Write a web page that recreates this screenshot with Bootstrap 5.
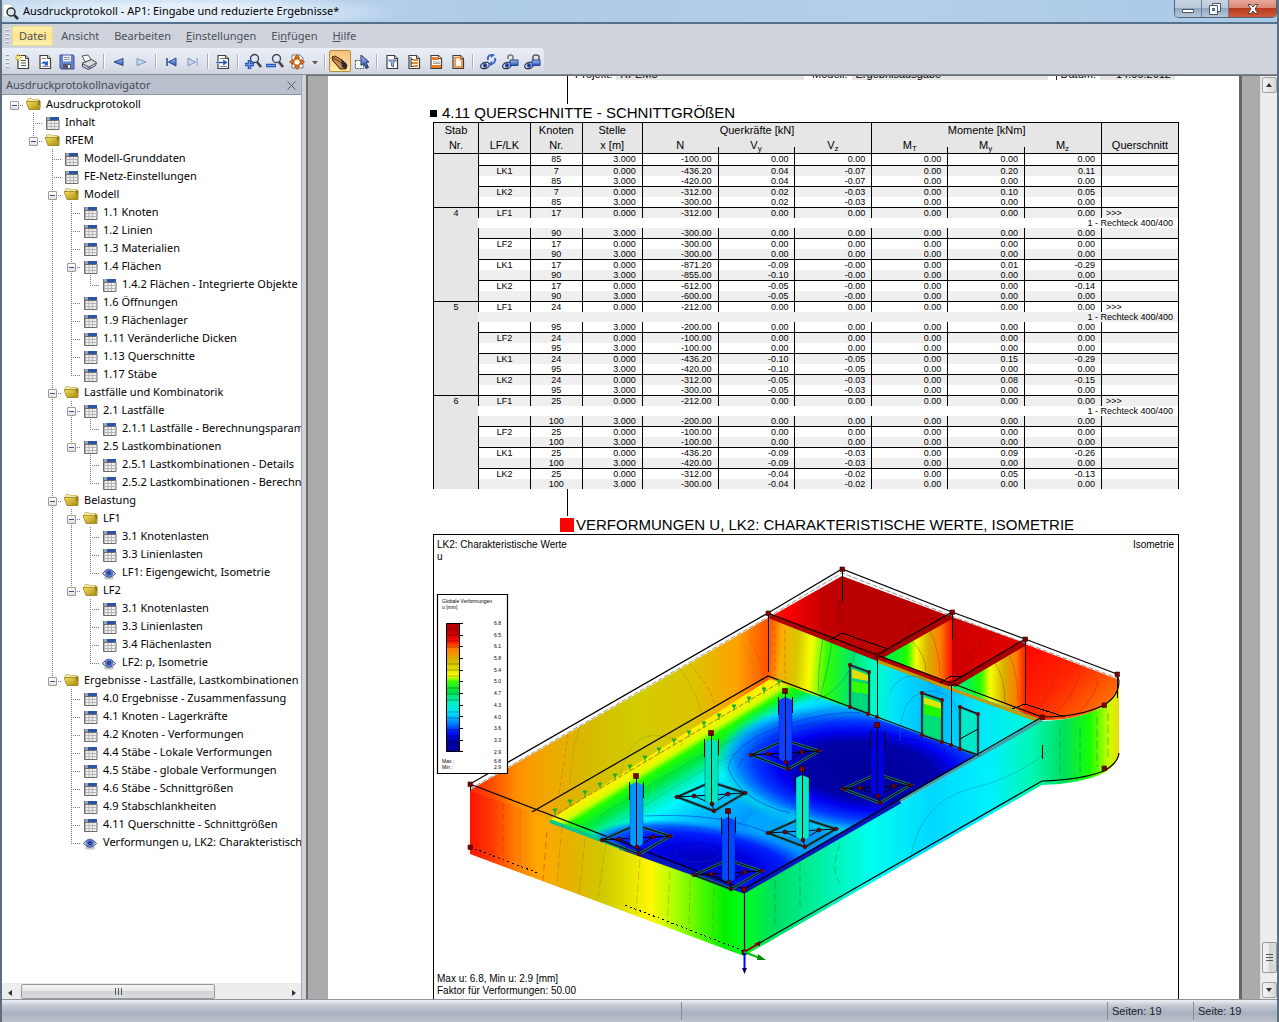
<!DOCTYPE html>
<html lang="de">
<head>
<meta charset="utf-8">
<meta name="viewport" content="width=device-width, initial-scale=1">
<title>Ausdruckprotokoll - AP1: Eingabe und reduzierte Ergebnisse*</title>
<link href="https://cdn.jsdelivr.net/npm/bootstrap@5.3.0/dist/css/bootstrap.min.css" rel="stylesheet">
<style>
:root{--ui:"Noto Sans","Open Sans",sans-serif;--doc:"Liberation Sans",Arial,sans-serif}
body{font:11px/18px var(--ui);color:#000;background:#cfd3dc}
button{font:inherit;color:inherit}
.app-window{height:100vh;border-left:2px solid #5d6e80;border-right:2px solid #5d6e80}
.title-strip{height:24px;background:radial-gradient(ellipse 220px 18px at 180px 12px,#e4effa 40%,#e4effa00),linear-gradient(90deg,#c3daf0,#aecbe8 40%,#b4cfe9 70%,#a9c9e8);border-bottom:2px solid #55708a}
.app-title{font-size:11px}
.win-buttons{height:18px;border:1px solid #4f6175;border-top:0;border-radius:0 0 5px 5px;overflow:hidden}
.win-btn{width:27px;border:0;border-right:1px solid #6b7f94;background:linear-gradient(#c8d4e2,#b9c8d9 48%,#93a8c0 50%,#b5c8dc)}
.win-btn.close-win{width:47px;border:0;background:linear-gradient(#e6a99d,#d98573 48%,#b93a1d 50%,#cf5a3a)}
.menu-strip{height:24px;color:#4b515b}
.menu-strip .nav-link{padding:0 6px;margin-right:1px;border:1px solid transparent;color:#4b515b;line-height:18px}
.menu-strip .nav-link.open-menu{background:linear-gradient(#fdf0b0,#fbe389 50%,#fdf2b4);border-color:#f0d889}
.grip{width:3px;height:14px;margin:0 3px 0 4px;background:repeating-linear-gradient(#fff 0 1px,#8d95a3 1px 2px,transparent 2px 4px)}
.tool-strip{height:26px;width:542px;border-radius:0 4px 4px 0;background:linear-gradient(#eaeef6,#dde2ec 60%,#cfd4df)}
.tool-btn{width:22px;height:22px;border:1px solid transparent;background:none;padding:0;flex:none}
.tool-btn.pressed{border-color:#b98a3c;background:linear-gradient(#f5c37f,#fbd08c 50%,#fff0a8);border-radius:2px}
.tool-btn.with-arrow{width:35px}
.tool-rule{width:2px;height:15px;margin:0 3px;border-left:1px solid #a9afbb;border-right:1px solid #fff;flex:none}
.tool-space{height:27px;border-bottom:1px solid #858b95}
.nav-pane{width:300px;background:#fff;border-right:1px solid #a3a9b4}
.pane-head{height:20px;background:#b9c0cb;border-bottom:1px solid #8f959f;color:#454b57;padding:0 5px 0 4px;flex:none}
.tree-list{padding-left:3px}
.tree-row{height:18px;white-space:nowrap}
.guide{width:19px;height:18px;flex:none;
 --dot-v:repeating-linear-gradient(#777 0 1px,transparent 1px 2px);--dot-h:repeating-linear-gradient(90deg,#777 0 1px,transparent 1px 2px);background-repeat:no-repeat}
.guide.bar{background-image:var(--dot-v);background-size:1px 18px;background-position:9px 0}
.guide.tee{background-image:var(--dot-v),var(--dot-h);background-size:1px 18px,10px 1px;background-position:9px 0,9px 10px}
.guide.elbow{background-image:var(--dot-v),var(--dot-h);background-size:1px 10px,10px 1px;background-position:9px 0,9px 10px}
.guide.rootline{background-image:var(--dot-h);background-size:10px 1px;background-position:9px 10px}
.twist{width:9px;height:9px;margin:6px 0 0 5px;padding:0;border:1px solid #9a9a9a;border-radius:1px;background:linear-gradient(#35508c,#35508c) center/5px 1px no-repeat,linear-gradient(#fff,#e2e2e2);display:block}
.tree-icon{width:16px;height:16px;margin:2px 4px 0 2px;flex:none}
.hbar{height:16px;background:#ededee;flex:none}
.vbar{width:17px;background:#ededee;border-left:1px solid #e2e2e2}
.bar-btn{width:15px;height:16px;border:0;background:none;padding:0}
.vbar .bar-btn{border:1px solid #a2a2a2;border-radius:2px;background:linear-gradient(90deg,#f5f5f5,#d5d6d8);margin:1px 0}
.hthumb{width:194px;height:15px;border:1px solid #979797;border-radius:2px;background:linear-gradient(#f4f4f4,#e8e8e9 45%,#d3d4d6 50%,#dadbdd)}
.vthumb{width:15px;height:31px;border:1px solid #979797;border-radius:2px;background:linear-gradient(90deg,#f4f4f4,#e8e8e9 45%,#d3d4d6 50%,#dadbdd);margin-bottom:8px}
.viewer{margin-left:4px;background:#ababab;border:2px solid #6b6b6b;border-width:1px 0 0 2px;min-width:0}
.sheet{margin:0 18px 0 20px;background:#fff;border-right:3px solid #666;padding:0 60px 0 105px;font-family:var(--doc)}
.sheet-head{height:28px;padding-left:134px}
.sheet-head-in{border-left:1px solid #000}
.head-line{height:4px;font-size:11px;line-height:12px;padding-left:7px;overflow:hidden}
.head-field{background:#e6e6e6;padding:0 4px;height:12px;flex:none}
.head-field.model{width:196px}
.head-field.date{width:75px;text-align:right}
.sheet h2{font-size:15px;line-height:18px;margin:0;font-weight:400;white-space:nowrap}
.square-s{width:7px;height:7px;background:#000;margin:0 5px 0 -3px}
.square-r{width:14px;height:14px;background:red;margin:0 2px 0 127px}
.drop-line{height:27px;margin-left:134px;border-left:1px solid #000}
.result-grid{width:100%;table-layout:fixed;border-collapse:separate;border-spacing:0;border-right:1px solid #000;font-size:9px;line-height:10px}
.result-grid th{font-weight:400;font-size:11px;line-height:15px;height:15px;text-align:center;padding:0;background:#e6e6e6;white-space:nowrap}
.result-grid thead tr:first-child th{border-top:1px solid #000}
.result-grid thead th{border-left:1px solid #000}
.result-grid thead th.half{border-left:0;background:linear-gradient(#000,#000) left bottom/1px 6px no-repeat #e6e6e6}
.result-grid sub{font-size:8px;line-height:0}
.result-grid td{padding:0;height:10px;border-left:1px solid #000;white-space:nowrap;overflow:hidden}
.result-grid td.num{text-align:right;padding-right:6px}
.result-grid td.stab{background:#e6e6e6}
.result-grid td.note{border-left-color:transparent;text-align:right;padding-right:5px}
.result-grid tr.shade td:not(.stab){background-color:#efefef}
.result-grid tr.ruled td:not(.stab),.result-grid tr.newbar td{border-top:1px solid #000}
.result-grid tr.first td{border-top:1px solid #000;height:11px;line-height:11px}
.figure-box{border:1px solid #000;border-bottom:0}
.figure-box svg{display:block;width:100%;height:auto}
.status-strip{height:23px;border-top:1px solid #8f959f;background:linear-gradient(#eceef2,#c4cad4 25%,#a9b1be 60%,#bdc3cd);font:11px/22px var(--doc);color:#20242b;flex:none}
.status-cell{width:86px;border-left:1px solid #858b96;padding-left:4px;height:18px;line-height:18px;flex:none}
.status-cell.wide{width:426px}
.status-cell.last{width:84px}
</style>
<script src="https://cdn.jsdelivr.net/npm/bootstrap@5.3.0/dist/js/bootstrap.bundle.min.js"></script>
</head>
<body class="overflow-hidden">
<svg width="0" height="0" class="position-absolute" aria-hidden="true">
 <defs>
  <linearGradient id="gold" x2="1" y2="1"><stop stop-color="#f6e060"/><stop offset="1" stop-color="#a88a08"/></linearGradient>
  <linearGradient id="blue" y2="1" x2="0"><stop stop-color="#a8c4f4"/><stop offset="1" stop-color="#1f4fb8"/></linearGradient>
  <symbol id="i-folder" viewBox="0 0 16 16"><path d="M1.500 2.500q0-1 1-1h3l1 1h6v5h-11z" fill="#f3e9a8" stroke="#b8a030" stroke-width=".6"/><path d="M0 4.500h11.500L14 12.500H3z" fill="url(#gold)" stroke="#8a7410" stroke-width=".7"/><path d="M12.500 2.500l2 1.500V12l-2.500-7z" fill="#8d7a14"/></symbol>
  <symbol id="i-sheet" viewBox="0 0 16 16"><path d="M1.500 2h12.500v12.500H1.500z" fill="#f0f0f0"/><path d="M2.500 5v9M6 5v9M9.500 5v9M2 8.500h11M2 11.500h11" stroke="#b4b4b4" fill="none"/><path d="M1 2h4v3H1z" fill="#9aa3b4"/><path d="M5 2h9v3H5z" fill="#2c55a8"/><path d="M1.500 2v12.500h12.500V5M1.500 5.500h12" stroke="#6d6d6d" fill="none"/></symbol>
  <symbol id="i-eye" viewBox="0 0 16 16"><ellipse cx="7" cy="13" rx="5" ry="1.500" fill="#c4c4c4"/><path d="M.5 8.500Q6.500 0 13.500 8.500Q7 16 .5 8.500z" fill="#dfe6f5" stroke="#3b4455"/><circle cx="7" cy="8" r="4.200" fill="#5577d6"/><circle cx="7" cy="8" r="1.800" fill="#0d1c50"/><circle cx="7" cy="8" r=".6" fill="#fff"/></symbol>
  <symbol id="i-page" viewBox="0 0 16 16"><path d="M3 1.500h7.500l3 3v10H3z" fill="#fff" stroke="#3c3c3c" stroke-width="1.200"/><path d="M10.500 1.500v3h3" fill="#ddd" stroke="#3c3c3c"/></symbol>
  <symbol id="i-glass" viewBox="0 0 16 16"><circle cx="8.500" cy="5.500" r="4" fill="#dfeafc" stroke="#3a3f48" stroke-width="1.300"/><path d="M11 9l4 5" stroke="#3a3f48" stroke-width="2.500"/></symbol>
  <symbol id="i-chain" viewBox="0 0 16 16"><ellipse cx="5" cy="11.500" rx="4.500" ry="3" fill="#e4e9f5" stroke="#2c3344" stroke-width="1.200" transform="rotate(-20 5 11.500)"/><circle cx="5" cy="11.500" r="2.400" fill="#4468cc"/><circle cx="5" cy="11.500" r="1" fill="#0a1640"/></symbol>
  <symbol id="i-up" viewBox="0 0 8 8"><path d="M4 2l3 4H1z" fill="#333"/></symbol>
 </defs>
</svg>

<div class="app-window d-flex flex-column">
 <header class="title-strip d-flex align-items-start justify-content-between flex-shrink-0">
  <div class="d-flex align-items-center h-100">
   <svg width="17" height="17" viewBox="0 0 17 17" class="me-1"><path d="M1 1h7l3 3v10H1z" fill="#fff" stroke="#c8c8c8"/><circle cx="9" cy="9" r="4" fill="#d8e4ee" stroke="#2d2d2d" stroke-width="1.500"/><path d="M12 12l4 4" stroke="#2d2d2d" stroke-width="2.500"/></svg>
   <h1 class="app-title m-0 fw-normal">Ausdruckprotokoll - AP1: Eingabe und reduzierte Ergebnisse*</h1>
  </div>
  <div class="win-buttons d-flex">
   <button class="win-btn p-0 d-flex align-items-center justify-content-center" aria-label="Minimieren"><svg width="12" height="12"><path d="M.5 6.500h11v3H.5z" fill="#fff" stroke="#4c5561"/></svg></button>
   <button class="win-btn p-0 d-flex align-items-center justify-content-center" aria-label="Wiederherstellen"><svg width="12" height="12"><path d="M3.500.5h8v8h-8z" fill="#fff" stroke="#4c5561"/><path d="M.5 2.500h8v9h-8z" fill="#fff" stroke="#4c5561"/><path d="M3.500 5.500h2v2h-2z" fill="#9ab" stroke="#4c5561"/></svg></button>
   <button class="win-btn close-win p-0 d-flex align-items-center justify-content-center" aria-label="Schließen"><svg width="12" height="12"><path d="M1 1.500h3l2 2.500 2-2.500h3L8 6l3 4.500H8L6 8l-2 2.500H1L4 6z" fill="#fff" stroke="#5a3b38"/></svg></button>
  </div>
 </header>

 <nav class="menu-strip d-flex align-items-center flex-shrink-0" aria-label="Menü">
  <span class="grip"></span>
  <div class="nav flex-nowrap">
   <a class="nav-link open-menu" href="#">Datei</a>
   <a class="nav-link" href="#">Ansicht</a>
   <a class="nav-link" href="#">Bearbeiten</a>
   <a class="nav-link" href="#"><u>E</u>instellungen</a>
   <a class="nav-link" href="#">Ei<u>n</u>fügen</a>
   <a class="nav-link" href="#"><u>H</u>ilfe</a>
  </div>
 </nav>

 <div class="tool-space flex-shrink-0">
 <div class="tool-strip d-flex align-items-center" role="toolbar" aria-label="Werkzeuge">
  <span class="grip"></span>
  <button class="tool-btn" aria-label="Neu"><svg width="16" height="16"><use href="#i-page"/><path d="M6 6.500h5M6 9h5M6 11.500h5" stroke="#555"/><path d="M3.500 0v7M0 3.500h7M1 1l5 5M6 1L1 6" stroke="#e8b400"/><circle cx="3.500" cy="3.500" r="1.500" fill="#fff3a0"/></svg></button>
  <button class="tool-btn" aria-label="Öffnen"><svg width="16" height="16"><use href="#i-page"/><path d="M5 4.500h4M5 12.500h7" stroke="#888"/><path d="M4 10q2-4 5-2l2-1v4.500H7l1-1.500q-2-1-4 0z" fill="#2f5fc4"/></svg></button>
  <button class="tool-btn" aria-label="Speichern"><svg width="16" height="16"><path d="M1 1h13l1 1v13H2l-1-1z" fill="#6484cc" stroke="#3a5596"/><path d="M4 1.500h8v6H4z" fill="#eef"/><path d="M4 10h8v5H4z" fill="#556"/><path d="M9 11h2v3H9z" fill="#eef"/><path d="M5 3.500h6M5 5.500h6" stroke="#99a"/></svg></button>
  <button class="tool-btn" aria-label="Drucken"><svg width="16" height="16"><path d="M1 2l6-1 4 6-6 2z" fill="#fff" stroke="#555"/><path d="M1.500 9l9-3.500 5 3-1 3-7 4-6-3z" fill="#d8dade" stroke="#3e3e3e"/><path d="M2 10l6 3 7-4" fill="none" stroke="#555"/><path d="M5 12l3 1.500 3-1.500-3 3z" fill="#4468c4"/></svg></button>
  <span class="tool-rule"></span>
  <button class="tool-btn" aria-label="Vorherige Seite"><svg width="12" height="10"><path d="M1 5l9-3.500v7z" fill="url(#blue)" stroke="#2a4688"/></svg></button>
  <button class="tool-btn" aria-label="Nächste Seite"><svg width="12" height="10"><path d="M11 5L2 1.500v7z" fill="#c5d6f0" stroke="#7f97c0"/></svg></button>
  <span class="tool-rule"></span>
  <button class="tool-btn" aria-label="Erste Seite"><svg width="12" height="10"><path d="M1 1h2v8H1z" fill="#4a6fc0"/><path d="M3.500 5L11 1v8z" fill="url(#blue)" stroke="#2a4688"/></svg></button>
  <button class="tool-btn" aria-label="Letzte Seite"><svg width="12" height="10"><path d="M9.500 1h1.500v8H9.500z" fill="#9db2d8"/><path d="M8.500 5L1 1v8z" fill="#c5d6f0" stroke="#7f97c0"/></svg></button>
  <span class="tool-rule"></span>
  <button class="tool-btn" aria-label="Gehe zu"><svg width="16" height="16"><use href="#i-page"/><path d="M5 4.500h5M5 12.500h7" stroke="#777"/><path d="M1 7.500h7V5l5 3.500L8 12V9.500H1z" fill="#2f55b0" stroke="#fff" stroke-width=".5"/></svg></button>
  <span class="tool-rule"></span>
  <button class="tool-btn" aria-label="Vergrößern"><svg width="18" height="17"><g transform="translate(2 0)"><use href="#i-glass" width="16" height="16"/></g><path d="M1 11.500h9M5.500 7v9" stroke="#1d43a8" stroke-width="3.500"/><path d="M1.500 11.500h8M5.500 7.500v8" stroke="#6c98f0" stroke-width="1.500"/></svg></button>
  <button class="tool-btn" aria-label="Verkleinern"><svg width="18" height="16"><g transform="translate(2 -1)"><use href="#i-glass" width="16" height="16"/></g><path d="M0 11.500h10" stroke="#1d43a8" stroke-width="3.500"/><path d="M.5 11.500h9" stroke="#6c98f0" stroke-width="1.500"/></svg></button>
  <button class="tool-btn with-arrow" aria-label="Ansicht anpassen"><svg width="30" height="16"><path d="M3 1h8l3 3v10H3z" fill="#fff" stroke="#777"/><g fill="#ee7a1c" stroke="#8f3d05" stroke-width=".7"><path d="M8 .5L10.500 4h-5z"/><path d="M8 15.500L10.500 12h-5z"/><path d="M.5 8L4 5.500v5z"/><path d="M15.500 8L12 5.500v5z"/></g><circle cx="8" cy="8" r="3.500" fill="#fff" stroke="#d8610c" stroke-width="1.800"/><path d="M23 7h6l-3 3.500z" fill="#555"/></svg></button>
  <span class="tool-rule"></span>
  <button class="tool-btn pressed" aria-label="Hand" aria-pressed="true"><svg width="18" height="18"><path d="M1 4l3-1 7 4 5 5-1 4H9L5 11 2 8z" fill="#c98a4a" stroke="#3a2410"/><path d="M2 5l6 3 5 5" stroke="#5a3818" fill="none"/><path d="M10 6l6 5-1 5-4-2z" fill="#2c2c34"/></svg></button>
  <button class="tool-btn" aria-label="Auswahl"><svg width="17" height="16"><path d="M1.500 6.500h8v8h-8z" fill="#fff" stroke="#555" stroke-dasharray="2 1"/><path d="M7 1l8 7-3 .5 2.500 5-2.500 1-2-5-3 2z" fill="url(#blue)" stroke="#26365e"/></svg></button>
  <span class="tool-rule"></span>
  <button class="tool-btn" aria-label="Filter"><svg width="16" height="16"><use href="#i-page"/><path d="M4.500 6h8l-3 3v4l-2-1V9z" fill="#9db6e6" stroke="#34466f" stroke-width=".7"/></svg></button>
  <button class="tool-btn" aria-label="Gliederung"><svg width="16" height="16"><use href="#i-page"/><path d="M5 3v10M5 5.500h2M5 9h2M5 12.500h2" stroke="#333"/><path d="M7 5h5v2H7zM7 8h5v2H7zM7 11h5v2H7z" fill="#ef8a20"/></svg></button>
  <button class="tool-btn" aria-label="Kopfzeile"><svg width="16" height="16"><use href="#i-page"/><path d="M4 3h7v3H4zM4 11h9v3H4z" fill="#ee7a1c"/><path d="M5 8h7M5 9.500h7" stroke="#888" stroke-width=".8"/></svg></button>
  <button class="tool-btn" aria-label="Rand"><svg width="16" height="16"><use href="#i-page"/><path d="M5 3.500h5.500v2H12v7.500H5z" fill="#fff" stroke="#ee7a1c" stroke-width="1.500"/></svg></button>
  <span class="tool-rule"></span>
  <button class="tool-btn" aria-label="Aktualisieren"><svg width="17" height="16"><use href="#i-chain" width="16" height="16"/><path d="M8 6q-1-4 3-5M15 4q1 4-3 6" fill="none" stroke="#3d66cc" stroke-width="2"/><path d="M11-1l4 2-4 3zM12 7l-4 3 4 2z" fill="#3d66cc"/></svg></button>
  <button class="tool-btn" aria-label="Entsperren"><svg width="17" height="16"><use href="#i-chain" width="16" height="16"/><path d="M6 5V3q0-2 2.500-2T11 3v3" fill="none" stroke="#777" stroke-width="1.500"/><path d="M8 6h8v5.500H8z" fill="url(#blue)" stroke="#26428c"/></svg></button>
  <button class="tool-btn" aria-label="Sperren"><svg width="17" height="16"><use href="#i-chain" width="16" height="16"/><path d="M9 6V3q0-2 3-2t3 2v3" fill="none" stroke="#555" stroke-width="1.500"/><path d="M8 6h8v5.500H8z" fill="url(#blue)" stroke="#26428c"/></svg></button>
 </div>
 </div>

 <main class="d-flex flex-grow-1 overflow-hidden">
  <aside class="nav-pane d-flex flex-column flex-shrink-0">
   <div class="pane-head d-flex justify-content-between align-items-center"><span>Ausdruckprotokollnavigator</span><button class="border-0 bg-transparent p-0 lh-1" aria-label="Navigator schließen"><svg width="9" height="9"><path d="M.5.5l8 8M8.500.5l-8 8" stroke="#555b66"/></svg></button></div>
   <div class="tree-list flex-grow-1 overflow-hidden" id="tree" role="tree" aria-label="Ausdruckprotokoll"></div>
   <div class="hbar d-flex align-items-center">
    <button class="bar-btn me-1" aria-label="Nach links"><svg width="8" height="8"><path d="M6 1v6L2 4z" fill="#333"/></svg></button>
    <div class="hthumb d-flex align-items-center justify-content-center"><svg width="9" height="7"><path d="M1.500 0v7M4.500 0v7M7.500 0v7" stroke="#555"/></svg></div>
    <button class="bar-btn ms-auto" aria-label="Nach rechts"><svg width="8" height="8"><path d="M2 1v6l4-3z" fill="#333"/></svg></button>
   </div>
  </aside>

  <section class="viewer d-flex flex-grow-1">
   <article class="sheet flex-grow-1 overflow-hidden">
    <div class="sheet-head"><div class="sheet-head-in h-100">
      <div class="head-line d-flex align-items-end">
       <span class="me-1">Projekt:</span><span class="head-field flex-grow-1">RFEM5</span>
       <span class="ms-2 me-1">Modell:</span><span class="head-field model">Ergebnisausgabe</span>
       <span class="ms-2 ps-1 me-1 border-start border-dark">Datum:</span><span class="head-field date me-1">14.06.2012</span>
      </div></div></div>
    <h2 class="d-flex align-items-center"><span class="square-s"></span>4.11 QUERSCHNITTE - SCHNITTGRÖßEN</h2>
    <table class="result-grid">
     <colgroup><col style="width:6.030%"><col style="width:6.970%"><col style="width:6.970%"><col style="width:8.040%"><col style="width:10.190%"><col style="width:10.320%"><col style="width:10.320%"><col style="width:10.190%"><col style="width:10.320%"><col style="width:10.320%"><col></colgroup>
     <thead>
      <tr><th>Stab</th><th></th><th>Knoten</th><th>Stelle</th><th colspan="3">Querkräfte [kN]</th><th colspan="3">Momente [kNm]</th><th></th></tr>
      <tr><th>Nr.</th><th>LF/LK</th><th>Nr.</th><th>x [m]</th><th>N</th><th class="half">V<sub>y</sub></th><th class="half">V<sub>z</sub></th><th>M<sub>T</sub></th><th class="half">M<sub>y</sub></th><th class="half">M<sub>z</sub></th><th>Querschnitt</th></tr>
     </thead>
     <tbody id="rows"></tbody>
    </table>
    <div class="drop-line"></div>
    <h2 class="d-flex align-items-center"><span class="square-r"></span>VERFORMUNGEN U, LK2: CHARAKTERISTISCHE WERTE, ISOMETRIE</h2>
    <div class="figure-box">
    <svg viewBox="434 534 744 466" font-family="Liberation Sans, Arial, sans-serif" font-size="10" role="img" aria-label="Verformungen u, Isometrie">
     <defs>
      <linearGradient id="wLeft" gradientUnits="userSpaceOnUse" x1="470" y1="0" x2="768" y2="0"><stop stop-color="#ff2000"/><stop offset=".09" stop-color="#ff5a00"/><stop offset=".16" stop-color="#ff9000"/><stop offset=".26" stop-color="#f0a800"/><stop offset=".38" stop-color="#d8b800"/><stop offset=".55" stop-color="#d2cc00"/><stop offset=".75" stop-color="#dcc400"/><stop offset=".9" stop-color="#ffa000"/><stop offset="1" stop-color="#ff5000"/></linearGradient>
      <linearGradient id="wFront" gradientUnits="userSpaceOnUse" x1="470" y1="0" x2="744" y2="0"><stop stop-color="#ff1400"/><stop offset=".08" stop-color="#ff3800"/><stop offset=".16" stop-color="#ff7800"/><stop offset=".25" stop-color="#ffa800"/><stop offset=".36" stop-color="#e8b000"/><stop offset=".48" stop-color="#d0c800"/><stop offset=".58" stop-color="#e4e400"/><stop offset=".66" stop-color="#fff800"/><stop offset=".75" stop-color="#a8ff00"/><stop offset=".86" stop-color="#40f800"/><stop offset=".93" stop-color="#00f000"/><stop offset="1" stop-color="#00ff20"/></linearGradient>
      <linearGradient id="wRight" gradientUnits="userSpaceOnUse" x1="744" y1="0" x2="1120" y2="0"><stop stop-color="#00ff20"/><stop offset=".08" stop-color="#00e060"/><stop offset=".2" stop-color="#00f0a0"/><stop offset=".34" stop-color="#00fff0"/><stop offset=".5" stop-color="#00d8ff"/><stop offset=".65" stop-color="#00f0ff"/><stop offset=".76" stop-color="#00f8b8"/><stop offset=".85" stop-color="#00e060"/><stop offset=".92" stop-color="#18ff00"/><stop offset=".97" stop-color="#c8ff00"/><stop offset="1" stop-color="#f0d800"/></linearGradient>
      <linearGradient id="wBack" gradientUnits="userSpaceOnUse" x1="768" y1="680" x2="1040" y2="700"><stop stop-color="#ff6000"/><stop offset=".04" stop-color="#f8b000"/><stop offset=".1" stop-color="#d8c800"/><stop offset=".15" stop-color="#f8ff00"/><stop offset=".21" stop-color="#30ff00"/><stop offset=".3" stop-color="#00e868"/><stop offset=".39" stop-color="#00ffc8"/><stop offset=".48" stop-color="#00e0ff"/><stop offset=".62" stop-color="#00b4ff"/><stop offset=".76" stop-color="#00e4ff"/><stop offset="1" stop-color="#00fcd8"/></linearGradient>
      <linearGradient id="wRoomA" gradientUnits="userSpaceOnUse" x1="892" y1="0" x2="952" y2="0"><stop stop-color="#00f040"/><stop offset=".25" stop-color="#20ff00"/><stop offset=".4" stop-color="#f8ff00"/><stop offset=".6" stop-color="#d8b000"/><stop offset=".8" stop-color="#ff8000"/><stop offset="1" stop-color="#ff1000"/></linearGradient>
      <linearGradient id="wRoomB" gradientUnits="userSpaceOnUse" x1="965" y1="0" x2="1025" y2="0"><stop stop-color="#00f060"/><stop offset=".25" stop-color="#20ff00"/><stop offset=".42" stop-color="#f8ff00"/><stop offset=".65" stop-color="#d8b000"/><stop offset=".85" stop-color="#ff8000"/><stop offset="1" stop-color="#ff2000"/></linearGradient>
      <linearGradient id="rRoom1" gradientUnits="userSpaceOnUse" x1="768" y1="0" x2="840" y2="0"><stop stop-color="#ff2000"/><stop offset=".3" stop-color="#f80000"/><stop offset=".75" stop-color="#c80000"/><stop offset="1" stop-color="#ba0000"/></linearGradient>
      <linearGradient id="rRoom2" gradientUnits="userSpaceOnUse" x1="952" y1="0" x2="1025" y2="0"><stop stop-color="#cc0000"/><stop offset="1" stop-color="#e80000"/></linearGradient>
      <linearGradient id="rRoom3" gradientUnits="userSpaceOnUse" x1="1030" y1="650" x2="1095" y2="715"><stop stop-color="#ff0800"/><stop offset=".5" stop-color="#ff2800"/><stop offset="1" stop-color="#ff7000"/></linearGradient>
      <linearGradient id="floorBase" gradientUnits="userSpaceOnUse" x1="640" y1="765" x2="692" y2="850"><stop stop-color="#fff000"/><stop offset=".07" stop-color="#d0ff00"/><stop offset=".13" stop-color="#20ff00"/><stop offset=".25" stop-color="#00e840"/><stop offset=".36" stop-color="#00f0a8"/><stop offset=".5" stop-color="#00f8ff"/><stop offset=".72" stop-color="#00c0ff"/><stop offset="1" stop-color="#0098ff"/></linearGradient>
      <radialGradient id="pool"><stop stop-color="#000098"/><stop offset=".45" stop-color="#0000a8"/><stop offset=".6" stop-color="#0000f0"/><stop offset=".76" stop-color="#0038ff"/><stop offset=".88" stop-color="#0088ff"/><stop offset="1" stop-color="#00a8ff" stop-opacity="0"/></radialGradient>
      <radialGradient id="pool2"><stop stop-color="#0000b8"/><stop offset=".4" stop-color="#0000e0"/><stop offset=".7" stop-color="#0020ff"/><stop offset=".87" stop-color="#0070ff"/><stop offset="1" stop-color="#0090ff" stop-opacity="0"/></radialGradient>
      <radialGradient id="halo"><stop offset=".7" stop-color="#00b0ff"/><stop offset=".86" stop-color="#00e8ff"/><stop offset="1" stop-color="#00f0b0" stop-opacity="0"/></radialGradient>
      <linearGradient id="scale" x2="0" y2="1"><stop stop-color="#b80000"/><stop offset=".09" stop-color="#d00000"/><stop offset=".14" stop-color="#ff1000"/><stop offset=".2" stop-color="#ff8000"/><stop offset=".28" stop-color="#d8b000"/><stop offset=".36" stop-color="#e0e000"/><stop offset=".41" stop-color="#ffff00"/><stop offset=".45" stop-color="#40ff00"/><stop offset=".53" stop-color="#00e040"/><stop offset=".62" stop-color="#00f0c0"/><stop offset=".7" stop-color="#00e0ff"/><stop offset=".78" stop-color="#0080ff"/><stop offset=".85" stop-color="#0010ff"/><stop offset=".93" stop-color="#0000a0"/></linearGradient>
      <clipPath id="floorClip"><path d="M548 820L770 678L978 755L744 892z"/></clipPath>
      <g id="footing"><path d="M-34 64L0 49L34 60L3 78z" fill="none" stroke="#1c6c74" stroke-width="3"/><path d="M-34 64L0 49L34 60L3 78zM-34 64L34 60M1 49V71L3 78M-17 63L1 71L17 61" fill="none" stroke="#000"/></g>
      <g id="pillar"><path d="M-6 9L0 6L7 9V68L1 72L-6 68z" fill="currentColor"/><path d="M.5 0V71M-6.500 6V24M7.500 6V22" stroke="#000" fill="none"/><path d="M-6 9V68M7 9V68" stroke="#002060" stroke-opacity=".35"/><g fill="#800000" stroke="#200000" stroke-width=".6"><path d="M-2.500-2.500h5v5h-5z"/><circle cx="-34" cy="64" r="1.800"/><circle cx="34" cy="60" r="1.800"/><circle cx="-17" cy="63" r="2"/><circle cx="17" cy="61" r="2"/><circle cx="1" cy="71" r="2"/><circle cx="3" cy="78" r="1.800"/></g></g>
      <path id="support" d="M0 0l-2-3h4zM0-3v6" stroke="#18b030" fill="#18b030"/>
      <g id="nd"><path d="M-2-2h4.500v4.500h-4.500z" fill="#800000" stroke="#300000" stroke-width=".6"/></g>
     </defs>
     <rect x="434" y="534" width="744" height="466" fill="#fff"/>
     <path d="M470 789L508 767L730 639L768 617V680L548 822z" fill="url(#wLeft)"/>
     <path d="M768 617L842 575L952 616L877 656z" fill="url(#rRoom1)"/>
     <path d="M952 616L1025 642L951 686L940 640z" fill="url(#rRoom2)"/>
     <path d="M1025 643L1117 678Q1123 692 1104 705Q1078 720 1042 719L1020 712z" fill="url(#rRoom3)"/>
     <path d="M877 656L952 617V686z" fill="url(#wRoomA)"/>
     <path d="M951 686L1025 644V714z" fill="url(#wRoomB)"/>
     <path d="M768 616L877 657L951 686L1042 719L978 757L768 680z" fill="url(#wBack)"/>
     <path d="M768 612L877 654L951 682L948 686L877 660L768 617z" fill="#b00000"/>
     <path d="M877 660L951 688L1042 721" fill="none" stroke="#c89800" stroke-width="3"/>
     <path d="M877 655L952 612L952 618L881 658zM951 682L1025 639L1025 645L955 686z" fill="#a80000"/>
     <g clip-path="url(#floorClip)">
      <path d="M540 820L770 670L990 755L744 900z" fill="url(#floorBase)"/>
      <ellipse cx="880" cy="760" rx="165" ry="78" fill="url(#halo)"/>
      <ellipse cx="868" cy="770" rx="150" ry="64" fill="url(#pool)" transform="rotate(6 868 770)"/>
      <ellipse cx="705" cy="860" rx="122" ry="38" fill="url(#pool2)" transform="rotate(8 705 860)"/>
      <ellipse cx="780" cy="822" rx="34" ry="14" fill="#00b0ff" opacity=".55"/>
      <g fill="none" stroke="#0028d0" stroke-opacity=".65" stroke-width=".8">
       <path d="M728 767Q735 735 810 717T940 740M728 767Q740 800 790 812M738 767Q748 740 815 722M645 815Q710 812 752 826T800 846" />
       <path d="M750 765Q770 740 820 730Q900 725 940 770" stroke-dasharray="4 2"/>
       <path d="M655 830Q700 820 745 840T760 875" stroke-dasharray="5 3"/><ellipse cx="697" cy="853" rx="22" ry="8"/><ellipse cx="895" cy="765" rx="60" ry="28" stroke-dasharray="2 2" stroke="#000060"/>
      </g>
      <path d="M600 815Q680 765 720 745T840 705M620 820Q690 775 730 755T860 710" fill="none" stroke="#008888" stroke-opacity=".5" stroke-width=".6"/>
     </g>
     <path d="M470 789L744 892V955L470 853z" fill="url(#wFront)"/>
     <path d="M744 892L1042 720Q1080 719 1104 705Q1120 695 1119 680V753Q1117 765 1104 772Q1080 783 1042 784L744 955z" fill="url(#wRight)"/>
     <path d="M620 846L744 890L900 800" stroke="#0818b8" stroke-width="5" fill="none"/>
     <path d="M550 820L625 848" stroke="#00c890" stroke-width="4" fill="none"/>
     <path d="M900 800L1042 719" stroke="#40a0a8" stroke-width="3" fill="none"/>
     <g fill="none" stroke-width=".8" stroke-opacity=".6">
      <path d="M503 802V862M547 830l-4 50" stroke="#e02000" stroke-dasharray="7 4"/>
      <path d="M485 796v60M520 808v60M562 824l-5 60M585 838l-6 54M606 842l-8 54M640 858l-4 54M670 870l-3 54M690 878l-1 54M714 886l-2 54" stroke="#a06000" stroke-opacity=".4" stroke-dasharray="9 3"/>
      <path d="M775 880v46M800 862v44M840 842q-10 30 0 40M1060 728v50M1080 728v48M1097 716v50M1108 712v45" stroke="#008040" stroke-dasharray="8 4"/>
      <path d="M910 860q10-60 60-72t80-40" stroke="#0090c0"/>
      <path d="M568 733l-9 60M690 663q28 32 24 48" stroke="#e05000" stroke-dasharray="4 3"/>
      <path d="M580 725q-10 30-10 60M680 668q15 20 22 45M620 775q10-45 40-40t20 10M740 640q20 30 24 50" stroke="#a0a000"/>
      <path d="M750 640q15 22 14 50M775 625v50M785 628v50" stroke="#e04000" stroke-dasharray="5 3"/>
      <path d="M823 636q-6 40-4 55M832 642q-4 28-12 54M855 650q-5 35-40 50M890 690q20-30 50 0M900 740q0-50 30-50t30 40" stroke="#0080a0"/>
      <path d="M912 640q14 15 14 30M930 630q10 20 10 45M995 662q10 15 10 40M1010 655q8 20 8 45" stroke="#a05000"/>
      <path d="M824 588v50M840 600v25M905 640q5-20 25-22t32 3M970 660q5-20 30-28" stroke="#500000" stroke-dasharray="6 3"/>
      <path d="M1060 665q-10 30-22 42M1080 672q-8 30-30 42M1098 680q-5 20-22 34" stroke="#c02000"/>
     </g>
     <g fill="none" stroke="#999" stroke-dasharray="5 2">
      <path d="M470 788L768 616M768 616L842 572L952 615L1025 642L1117 677"/>
     </g>
     <g fill="none" stroke="#000" stroke-width="1.200">
      <path d="M470 783L768 612L842 568L952 611L1025 638L1117 673M470 783L744 888L1042 716M768 612L877 654L951 682L1042 716M877 654L952 611M951 682L1025 638"/>
      <path d="M532 811L768 675L978 754"/>
      <path d="M744.500 888V951M744 951L1042 780M1042 716Q1080 716 1104 704Q1119 695 1119 680L1117 673M1042 780Q1080 779 1104 770Q1118 762 1119 752"/>
     </g>
     <g fill="none" stroke="#000" shape-rendering="crispEdges">
      <path d="M842 568V601M768 612V671M877 654V716M951 682V744M952 611V638M1025 638V703M1117 673V697M1042 744V758M470 783V790"/>
      <path d="M830 639L842 632L888 648M940 682L951 675L962 676M1012 708L1025 703L1065 716M960 737L978 728"/>
      <path d="M470 846L538 872M625 904L744 950" stroke-dasharray="2 3"/>
     </g>
     <g stroke="#24737c" stroke-width="2.500">
      <path d="M850 664L869 671V713L850 706z" fill="#00d878"/><path d="M922 692L942 699V741L922 734z" fill="#00e078"/><path d="M960 706L978 713V754L960 748z" fill="#00e8c8"/>
     </g>
     <path d="M852 668l16 6v6l-16-3z" fill="#e0e000"/><path d="M852 680l16 3v10l-16-2z" fill="#30ff00"/><path d="M924 696l17 6v6l-17-5z" fill="#d8e800"/><path d="M924 703l17 5v9l-17-4z" fill="#20f800"/>
     <path d="M850 664L869 671V713L850 706zM922 692L942 699V741L922 734zM960 706L978 713V754L960 748zM960 738l18-10" fill="none" stroke="#000"/>
     <g fill="#700000"><circle cx="850" cy="664" r="2"/><circle cx="869" cy="671" r="2"/><circle cx="868" cy="713" r="2"/><circle cx="850" cy="706" r="2"/><circle cx="922" cy="692" r="2"/><circle cx="942" cy="699" r="2"/><circle cx="942" cy="741" r="2"/><circle cx="922" cy="734" r="2"/><circle cx="960" cy="706" r="2"/><circle cx="978" cy="713" r="2"/><circle cx="960" cy="748" r="2"/><circle cx="877" cy="716" r="2"/><circle cx="951" cy="744" r="2"/></g>
     <path d="M552 816L782 680" stroke="#8a8a20" stroke-dasharray="5 2" fill="none"/>
     <g><use href="#support" x="555" y="811"/><use href="#support" x="570" y="802"/><use href="#support" x="585" y="793"/><use href="#support" x="600" y="785"/><use href="#support" x="615" y="776"/><use href="#support" x="630" y="767"/><use href="#support" x="645" y="758"/><use href="#support" x="659" y="750"/><use href="#support" x="674" y="741"/><use href="#support" x="689" y="733"/><use href="#support" x="704" y="724"/><use href="#support" x="719" y="716"/><use href="#support" x="734" y="707"/><use href="#support" x="749" y="699"/><use href="#support" x="764" y="690"/><use href="#support" x="779" y="682"/></g>
     <use href="#footing" x="785" y="690"/><use href="#pillar" x="785" y="690" color="#1040ff"/>
     <use href="#footing" x="877" y="724"/><use href="#pillar" x="877" y="724" color="#0000e0"/>
     <use href="#footing" x="711" y="732"/><use href="#pillar" x="711" y="732" color="#00e8b8"/>
     <use href="#footing" x="802" y="768"/><use href="#pillar" x="802" y="768" color="#00ecc8"/>
     <use href="#footing" x="636" y="775"/><use href="#pillar" x="636" y="775" color="#0098ff"/>
     <use href="#footing" x="728" y="810"/><use href="#pillar" x="728" y="810" color="#0048ff"/>
     <use href="#nd" x="470" y="783"/><use href="#nd" x="470" y="846"/><use href="#nd" x="768" y="612"/><use href="#nd" x="842" y="568"/><use href="#nd" x="952" y="611"/><use href="#nd" x="1025" y="638"/><use href="#nd" x="1117" y="673"/><use href="#nd" x="877" y="654"/><use href="#nd" x="951" y="682"/><use href="#nd" x="1042" y="716"/><use href="#nd" x="1104" y="704"/><use href="#nd" x="1104" y="767"/><use href="#nd" x="744" y="888"/><use href="#nd" x="744" y="951"/>
     <path d="M744 951L760 942" stroke="#a00000" stroke-width="2"/><path d="M754 943l6-3v5z" fill="#700000"/>
     <path d="M744 951L760 957" stroke="#00c000" stroke-width="2"/><path d="M758 953l8 6-9 0z" fill="#009000"/>
     <path d="M744.500 952V970" stroke="#0000ff" stroke-width="2"/><path d="M742 967h5l-2.500 6z" fill="#000070"/>

     <path d="M437.500 593.500h70v179h-70z" fill="#fff" stroke="#000" stroke-width="1.200"/>
     <path d="M446.500 622.500h13v128h-13z" fill="url(#scale)" stroke="#000"/>
     <path d="M446 628h14M446 634h14M446 640h14M446 646h14M446 663h14M446 669h14M446 675h14M446 687h14M446 693h14M446 699h14M446 711h14M446 717h14M446 729h14M446 735h14M446 741h14" stroke="#000" stroke-opacity=".3"/>
     <path d="M459 622.500h4M459 634.500h4M459 645.500h4M459 657.500h4M459 669.500h4M459 680.500h4M459 692.500h4M459 704.500h4M459 715.500h4M459 727.500h4M459 739.500h4M459 750.500h4" stroke="#000"/>
     <g font-size="5"><text x="442" y="602">Globale Verformungen</text><text x="442" y="608">u [mm]</text><text x="442" y="762">Max :</text><text x="442" y="768">Min :</text>
      <g text-anchor="end"><text x="501" y="624">6.8</text><text x="501" y="636">6.5</text><text x="501" y="647">6.1</text><text x="501" y="659">5.8</text><text x="501" y="671">5.4</text><text x="501" y="682">5.0</text><text x="501" y="694">4.7</text><text x="501" y="706">4.3</text><text x="501" y="718">4.0</text><text x="501" y="729">3.6</text><text x="501" y="741">3.3</text><text x="501" y="753">2.9</text><text x="501" y="762">6.8</text><text x="501" y="768">2.9</text></g></g>
     <text x="437" y="547">LK2: Charakteristische Werte</text><text x="437" y="559">u</text>
     <text x="1174" y="547" text-anchor="end">Isometrie</text>
     <text x="437" y="981">Max u: 6.8, Min u: 2.9 [mm]</text><text x="437" y="993">Faktor für Verformungen: 50.00</text>
    </svg>
    </div>
   </article>
   <div class="vbar d-flex flex-column align-items-center flex-shrink-0">
    <button class="bar-btn" aria-label="Nach oben"><svg width="8" height="8" class="d-block mx-auto"><use href="#i-up"/></svg></button>
    <div class="vthumb mt-auto d-flex align-items-center justify-content-center"><svg width="7" height="9"><path d="M0 1.500h7M0 4.500h7M0 7.500h7" stroke="#555"/></svg></div>
    <button class="bar-btn" aria-label="Nach unten"><svg width="8" height="8" class="d-block mx-auto"><path d="M4 6l3-4H1z" fill="#333"/></svg></button>
   </div>
  </section>
 </main>

 <footer class="status-strip d-flex align-items-center justify-content-end">
  <div class="status-cell wide"></div>
  <div class="status-cell">Seiten: 19</div>
  <div class="status-cell last">Seite: 19</div>
 </footer>
</div>

<script>
/* Navigator entries: level, icon, label */
const entries = [
[0,'folder','Ausdruckprotokoll'],[1,'sheet','Inhalt'],[1,'folder','RFEM'],[2,'sheet','Modell-Grunddaten'],[2,'sheet','FE-Netz-Einstellungen'],
[2,'folder','Modell'],[3,'sheet','1.1 Knoten'],[3,'sheet','1.2 Linien'],[3,'sheet','1.3 Materialien'],[3,'sheet','1.4 Flächen'],[4,'sheet','1.4.2 Flächen - Integrierte Objekte'],
[3,'sheet','1.6 Öffnungen'],[3,'sheet','1.9 Flächenlager'],[3,'sheet','1.11 Veränderliche Dicken'],[3,'sheet','1.13 Querschnitte'],[3,'sheet','1.17 Stäbe'],
[2,'folder','Lastfälle und Kombinatorik'],[3,'sheet','2.1 Lastfälle'],[4,'sheet','2.1.1 Lastfälle - Berechnungsparameter'],[3,'sheet','2.5 Lastkombinationen'],[4,'sheet','2.5.1 Lastkombinationen - Details'],[4,'sheet','2.5.2 Lastkombinationen - Berechnungsparameter'],
[2,'folder','Belastung'],[3,'folder','LF1'],[4,'sheet','3.1 Knotenlasten'],[4,'sheet','3.3 Linienlasten'],[4,'eye','LF1: Eigengewicht, Isometrie'],
[3,'folder','LF2'],[4,'sheet','3.1 Knotenlasten'],[4,'sheet','3.3 Linienlasten'],[4,'sheet','3.4 Flächenlasten'],[4,'eye','LF2: p, Isometrie'],
[2,'folder','Ergebnisse - Lastfälle, Lastkombinationen'],[3,'sheet','4.0 Ergebnisse - Zusammenfassung'],[3,'sheet','4.1 Knoten - Lagerkräfte'],[3,'sheet','4.2 Knoten - Verformungen'],[3,'sheet','4.4 Stäbe - Lokale Verformungen'],[3,'sheet','4.5 Stäbe - globale Verformungen'],[3,'sheet','4.6 Stäbe - Schnittgrößen'],[3,'sheet','4.9 Stabschlankheiten'],[3,'sheet','4.11 Querschnitte - Schnittgrößen'],[3,'eye','Verformungen u, LK2: Charakteristische Werte, Isometrie']];
const hasNext = (i, lvl) => { for (let k = i + 1; k < entries.length; k++) { if (entries[k][0] < lvl) return false; if (entries[k][0] === lvl) return true; } return false; };
document.getElementById('tree').innerHTML = entries.map(([lvl, icon, label], i) => {
  let g = '';
  for (let c = 0; c < lvl; c++) g += `<span class="guide ${c && hasNext(i, c) ? 'bar' : ''}"></span>`;
  const parent = entries[i + 1] && entries[i + 1][0] > lvl;
  const kind = lvl === 0 ? 'rootline' : hasNext(i, lvl) ? 'tee' : 'elbow';
  g += `<span class="guide ${kind}">${parent ? `<button class="twist" aria-label="${label} zuklappen"></button>` : ''}</span>`;
  return `<div class="tree-row d-flex" role="treeitem" aria-level="${lvl + 1}">${g}<svg class="tree-icon"><use href="#i-${icon}"/></svg><span>${label}</span></div>`;
}).join('');

/* Result rows: bar, load case, node, x, N, Vy, Vz, MT, My, Mz */
const data = `||85|3.000|-100.00|0.00|0.00|0.00|0.00|0.00
|LK1|7|0.000|-436.20|0.04|-0.07|0.00|0.20|0.11
||85|3.000|-420.00|0.04|-0.07|0.00|0.00|0.00
|LK2|7|0.000|-312.00|0.02|-0.03|0.00|0.10|0.05
||85|3.000|-300.00|0.02|-0.03|0.00|0.00|0.00
4|LF1|17|0.000|-312.00|0.00|0.00|0.00|0.00|0.00
||90|3.000|-300.00|0.00|0.00|0.00|0.00|0.00
|LF2|17|0.000|-300.00|0.00|0.00|0.00|0.00|0.00
||90|3.000|-300.00|0.00|0.00|0.00|0.00|0.00
|LK1|17|0.000|-871.20|-0.09|-0.00|0.00|0.01|-0.29
||90|3.000|-855.00|-0.10|-0.00|0.00|0.00|0.00
|LK2|17|0.000|-612.00|-0.05|-0.00|0.00|0.00|-0.14
||90|3.000|-600.00|-0.05|-0.00|0.00|0.00|0.00
5|LF1|24|0.000|-212.00|0.00|0.00|0.00|0.00|0.00
||95|3.000|-200.00|0.00|0.00|0.00|0.00|0.00
|LF2|24|0.000|-100.00|0.00|0.00|0.00|0.00|0.00
||95|3.000|-100.00|0.00|0.00|0.00|0.00|0.00
|LK1|24|0.000|-436.20|-0.10|-0.05|0.00|0.15|-0.29
||95|3.000|-420.00|-0.10|-0.05|0.00|0.00|0.00
|LK2|24|0.000|-312.00|-0.05|-0.03|0.00|0.08|-0.15
||95|3.000|-300.00|-0.05|-0.03|0.00|0.00|0.00
6|LF1|25|0.000|-212.00|0.00|0.00|0.00|0.00|0.00
||100|3.000|-200.00|0.00|0.00|0.00|0.00|0.00
|LF2|25|0.000|-100.00|0.00|0.00|0.00|0.00|0.00
||100|3.000|-100.00|0.00|0.00|0.00|0.00|0.00
|LK1|25|0.000|-436.20|-0.09|-0.03|0.00|0.09|-0.26
||100|3.000|-420.00|-0.09|-0.03|0.00|0.00|0.00
|LK2|25|0.000|-312.00|-0.04|-0.02|0.00|0.05|-0.13
||100|3.000|-300.00|-0.04|-0.02|0.00|0.00|0.00`.split('\n');
let n = 0, out = '';
for (const line of data) {
  const f = line.split('|');
  const cls = [n === 0 ? 'first' : '', n % 2 ? 'shade' : '', f[0] ? 'newbar' : f[1] ? 'ruled' : ''].join(' ');
  out += `<tr class="${cls}"><td class="stab text-center">${f[0]}</td><td class="text-center">${f[1]}</td><td class="text-center">${f[2]}</td>` +
    f.slice(3).map(v => `<td class="num">${v}</td>`).join('') + `<td class="ps-1">${f[0] ? '&gt;&gt;&gt;' : ''}</td></tr>`;
  n++;
  if (f[0]) { out += `<tr class="${n % 2 ? 'shade' : ''}"><td class="stab"></td><td class="note" colspan="10">1 - Rechteck 400/400</td></tr>`; n++; }
}
document.getElementById('rows').innerHTML = out;
</script>
</body>
</html>
